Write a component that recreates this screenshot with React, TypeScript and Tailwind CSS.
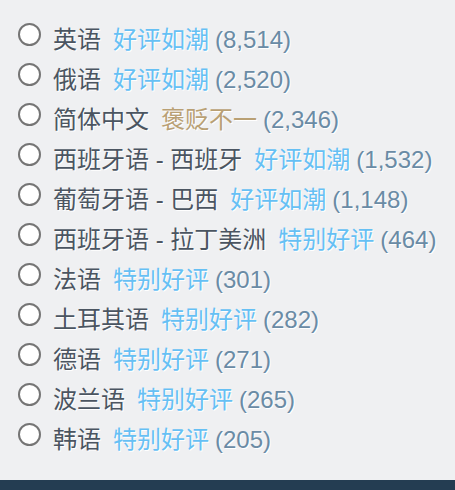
const rows = [
  { label: '英语', rating: '好评如潮', kind: 'pos', count: '8,514' },
  { label: '俄语', rating: '好评如潮', kind: 'pos', count: '2,520' },
  { label: '简体中文', rating: '褒贬不一', kind: 'mixed', count: '2,346' },
  { label: '西班牙语 - 西班牙', rating: '好评如潮', kind: 'pos', count: '1,532' },
  { label: '葡萄牙语 - 巴西', rating: '好评如潮', kind: 'pos', count: '1,148' },
  { label: '西班牙语 - 拉丁美洲', rating: '特别好评', kind: 'pos', count: '464' },
  { label: '法语', rating: '特别好评', kind: 'pos', count: '301' },
  { label: '土耳其语', rating: '特别好评', kind: 'pos', count: '282' },
  { label: '德语', rating: '特别好评', kind: 'pos', count: '271' },
  { label: '波兰语', rating: '特别好评', kind: 'pos', count: '265' },
  { label: '韩语', rating: '特别好评', kind: 'pos', count: '205' },
]

export default function App() {
  return (
    <div
      className="w-[455px] h-[490px] bg-[#eff0f2] flex flex-col [text-shadow:1px_1px_0_#fff]"
      style={{ fontFamily: '"Liberation Sans", "Noto Sans CJK SC", sans-serif' }}
    >
      <div className="flex flex-col pt-5 pb-5 pl-[18px]">
        {rows.map((r) => (
          <label key={r.label} className="flex items-start h-10 text-[24px] leading-10 whitespace-nowrap">
            <span className="mt-[3px] w-[23px] h-[23px] shrink-0 rounded-full border-2 border-[#757575] bg-white" />
            <span className="ml-3 text-[#4b5561]">{r.label}</span>
            <span className={'ml-[12px] ' + (r.kind === 'mixed' ? 'text-[#b9a074]' : 'text-[#66c0f4]')}>
              {r.rating}
            </span>
            <span className="ml-[6px] text-[#6a8ba5]">({r.count})</span>
          </label>
        ))}
      </div>
      <div className="mt-auto h-[10px] bg-[#243d52]" />
    </div>
  )
}
